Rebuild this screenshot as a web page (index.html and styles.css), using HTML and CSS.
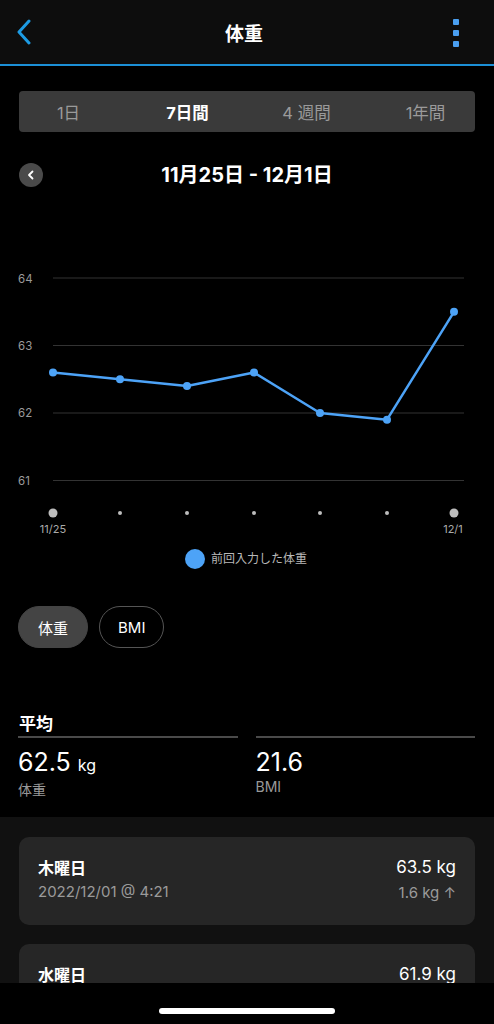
FILE: index.html
```html
<!DOCTYPE html>
<html lang="ja">
<head>
    <meta charset="utf-8">
    <title>体重</title>
    <link rel="stylesheet" href="styles.css">
</head>
<body>
    <header class="topbar">
        <svg class="back" width="16" height="26" viewBox="0 0 16 26">
            <polyline points="13,2 3,13 13,24" fill="none" stroke="#1d9be3" stroke-width="3" stroke-linecap="round" stroke-linejoin="round"/>
        </svg>
        <h1 class="title">体重</h1>
        <div class="menu"><span></span><span></span><span></span></div>
    </header>

    <main>
        <div class="segments">
            <div class="track">
                <span>1日</span>
                <span class="active">7日間</span>
                <span>4 週間</span>
                <span>1年間</span>
            </div>
        </div>

        <div class="range">
            <span class="prev">
                <svg width="10" height="10" viewBox="0 0 10 10">
                    <polyline points="6.5,1.5 3,5 6.5,8.5" fill="none" stroke="#fff" stroke-width="1.8" stroke-linecap="round" stroke-linejoin="round"/>
                </svg>
            </span>
            <h2>11月25日 - 12月1日</h2>
        </div>

        <!-- chart: y = 226 - (kg - 62) * 67.5 -->
        <svg class="chart" width="494" height="390" viewBox="0 0 494 390">
            <g class="grid">
                <line x1="53" y1="91" x2="464" y2="91"/>
                <line x1="53" y1="158.5" x2="464" y2="158.5"/>
                <line x1="53" y1="226" x2="464" y2="226"/>
                <line x1="53" y1="293.5" x2="464" y2="293.5"/>
            </g>
            <g class="ylabels">
                <text x="18" y="96">64</text>
                <text x="18" y="163">63</text>
                <text x="18" y="230">62</text>
                <text x="18" y="298">61</text>
            </g>
            <polyline class="line" points="53,185.5 120,192.2 187,199 254,185.5 320,226 387,232.7 454,124.8"/>
            <g class="pts">
                <circle cx="53" cy="185.5" r="4"/>
                <circle cx="120" cy="192.2" r="4"/>
                <circle cx="187" cy="199" r="4"/>
                <circle cx="254" cy="185.5" r="4"/>
                <circle cx="320" cy="226" r="4"/>
                <circle cx="387" cy="232.7" r="4"/>
                <circle cx="454" cy="124.8" r="4"/>
            </g>
            <g class="ticks">
                <circle cx="53" cy="326" r="4.5"/>
                <circle cx="120" cy="326" r="2"/>
                <circle cx="187" cy="326" r="2"/>
                <circle cx="254" cy="326" r="2"/>
                <circle cx="320" cy="326" r="2"/>
                <circle cx="387" cy="326" r="2"/>
                <circle cx="454" cy="326" r="4.5"/>
            </g>
            <g class="xlabels">
                <text x="53" y="346">11/25</text>
                <text x="453" y="346">12/1</text>
            </g>
            <circle cx="195" cy="372" r="10" fill="#4da3f7"/>
            <text class="legend" x="211" y="376">前回入力した体重</text>
        </svg>

        <div class="chips">
            <span class="chip on">体重</span>
            <span class="chip">BMI</span>
        </div>

        <section class="avg">
            <h3>平均</h3>
            <div class="stats">
                <div class="stat">
                    <div class="num">62.5 <small>kg</small></div>
                    <div class="label">体重</div>
                </div>
                <div class="stat">
                    <div class="num">21.6</div>
                    <div class="label">BMI</div>
                </div>
            </div>
        </section>

        <section class="log">
            <div class="entry">
                <div>
                    <div class="day">木曜日</div>
                    <div class="sub">2022/12/01 @ 4:21</div>
                </div>
                <div class="right">
                    <div class="kg">63.5 kg</div>
                    <div class="sub">1.6 kg ↑</div>
                </div>
            </div>
            <div class="entry">
                <div>
                    <div class="day">水曜日</div>
                    <div class="sub">2022/11/30 @ 5:02</div>
                </div>
                <div class="right">
                    <div class="kg">61.9 kg</div>
                    <div class="sub">0.1 kg ↓</div>
                </div>
            </div>
        </section>
    </main>

    <div class="homebar"><span></span></div>
</body>
</html>
```

FILE: styles.css
```css
body {
    margin: 0;
    background: #000;
    color: #fff;
    font-family: Inter, "Noto Sans CJK JP", sans-serif;
    width: 494px;
    height: 1024px;
    overflow: hidden;
}

.topbar {
    height: 64px;
    background: #0d0d0d;
    border-bottom: 2px solid #1c8fd6;
    display: flex;
    align-items: center;
    justify-content: space-between;
    padding: 0 30px 0 16px;
}
.back { display: block; }
.title {
    margin: 0;
    font-size: 19px;
    font-weight: 700;
    padding-left: 8px;
}
.menu {
    display: flex;
    flex-direction: column;
    gap: 5px;
    width: 16px;
    align-items: center;
    margin-top: 2px;
}
.menu span {
    width: 6px;
    height: 6px;
    border-radius: 1px;
    background: #4a9ff0;
}

.segments {
    margin: 25px 19px 0;
    height: 41px;
    background: #3a3a3a;
    border-radius: 4px;
    display: flex;
    align-items: center;
}
.track {
    flex: 1;
    margin: 0 -10px;
    display: grid;
    grid-template-columns: repeat(4, 1fr);
    font-size: 16.5px;
    color: #9a9a9a;
}
.track span { text-align: center; }
.track .active { color: #fff; font-weight: 700; }

.range {
    margin: 31px 19px 0;
    height: 24px;
    position: relative;
    display: flex;
    align-items: center;
    justify-content: center;
}
.prev {
    position: absolute;
    left: 0;
    top: 0;
    width: 24px;
    height: 24px;
    border-radius: 50%;
    background: #4a4a4a;
    display: flex;
    align-items: center;
    justify-content: center;
}
.range h2 {
    margin: 0;
    font-size: 20px;
    font-weight: 700;
    line-height: 24px;
    margin-top: -1px;
}

.chart { display: block; }
.grid line { stroke: #333; stroke-width: 1; }
.ylabels text { fill: #9a9a9a; font-size: 11.5px; }
.line { fill: none; stroke: #4da3f7; stroke-width: 2.5; stroke-linejoin: round; }
.pts circle { fill: #4da3f7; }
.ticks circle { fill: #bdbdbd; }
.xlabels text { fill: #aaa; font-size: 11px; text-anchor: middle; }
.legend { fill: #b8b8b8; font-size: 12px; }

.chips {
    margin: 29px 18px 0;
    display: flex;
    gap: 11px;
}
.chip {
    height: 42px;
    box-sizing: border-box;
    padding: 0 18px;
    border-radius: 21px;
    border: 1px solid #555;
    display: flex;
    align-items: center;
    font-size: 15px;
}
.chip.on { background: #444; border-color: #444; padding: 0 19px; }

.avg {
    margin: 64px 19px 0;
    padding-bottom: 18px;
}
.avg h3 {
    margin: 0;
    font-size: 17px;
    font-weight: 700;
    line-height: 24px;
}
.stats {
    display: grid;
    grid-template-columns: 1fr 1fr;
    gap: 18px;
    margin-left: -1px;
}
.stat {
    border-top: 2px solid #4a4a4a;
    padding-top: 10px;
}
.num {
    font-size: 25px;
    line-height: 28px;
}
.num small { font-size: 16px; }
.label {
    font-size: 14px;
    line-height: 18px;
    color: #999;
    margin-top: 2px;
}

.log {
    background: #111;
    padding: 20px 19px;
    height: 167px;
    overflow: hidden;
}
.entry {
    background: #262626;
    border-radius: 10px;
    padding: 20px 19px 21px;
    display: flex;
    justify-content: space-between;
    margin-bottom: 19px;
}
.day { font-size: 16px; font-weight: 700; line-height: 22px; }
.sub { font-size: 15px; color: #9a9a9a; line-height: 22px; margin-top: 2px; }
.right { text-align: right; }
.kg { font-size: 17px; line-height: 20px; }
.right .sub { margin-top: 5px; }

.homebar {
    position: fixed;
    left: 0;
    right: 0;
    bottom: 0;
    height: 41px;
    background: #000;
    display: flex;
    justify-content: center;
}
.homebar span {
    margin-top: 25px;
    width: 176px;
    height: 6px;
    border-radius: 3px;
    background: #fff;
}
```
